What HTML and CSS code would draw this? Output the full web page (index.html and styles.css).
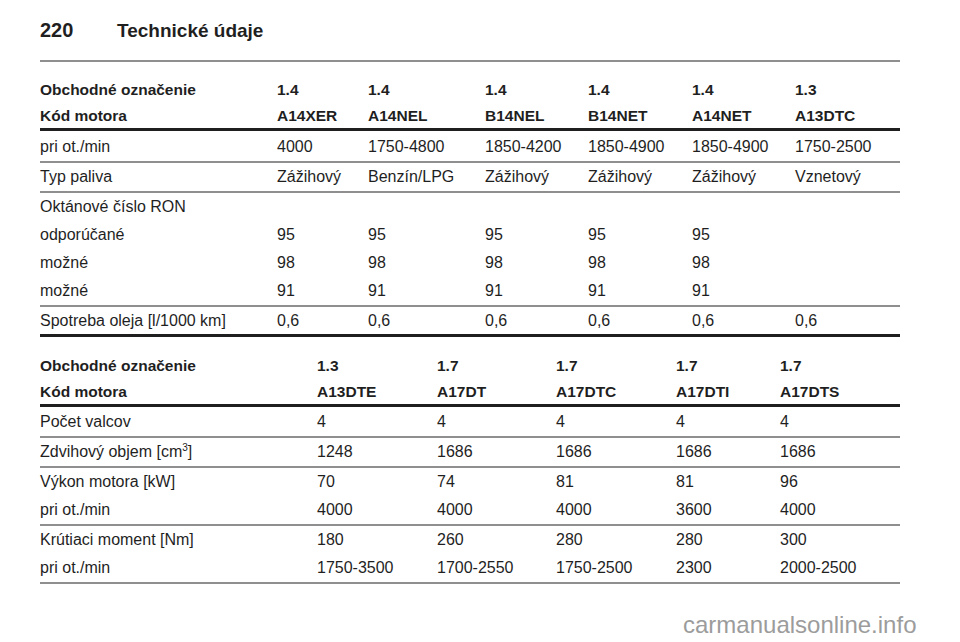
FILE: index.html
```html
<!DOCTYPE html>
<html lang="sk">
<head>
<meta charset="utf-8">
<title>Technické údaje</title>
<link rel="stylesheet" href="styles.css">
</head>
<body>
<div class="page">
  <header class="head">
    <span class="pno">220</span>
    <span class="ptitle">Technické údaje</span>
  </header>

  <section class="tbl t1">
    <div class="grp ghead">
      <div class="row h"><span>Obchodné označenie</span><span>1.4</span><span>1.4</span><span>1.4</span><span>1.4</span><span>1.4</span><span>1.3</span></div>
      <div class="row h"><span>Kód motora</span><span>A14XER</span><span>A14NEL</span><span>B14NEL</span><span>B14NET</span><span>A14NET</span><span>A13DTC</span></div>
    </div>
    <div class="grp first">
      <div class="row"><span>pri ot./min</span><span>4000</span><span>1750-4800</span><span>1850-4200</span><span>1850-4900</span><span>1850-4900</span><span>1750-2500</span></div>
    </div>
    <div class="grp">
      <div class="row"><span>Typ paliva</span><span>Zážihový</span><span>Benzín/LPG</span><span>Zážihový</span><span>Zážihový</span><span>Zážihový</span><span>Vznetový</span></div>
    </div>
    <div class="grp">
      <div class="row"><span>Oktánové číslo RON</span><span></span><span></span><span></span><span></span><span></span><span></span></div>
      <div class="row"><span>odporúčané</span><span>95</span><span>95</span><span>95</span><span>95</span><span>95</span><span></span></div>
      <div class="row"><span>možné</span><span>98</span><span>98</span><span>98</span><span>98</span><span>98</span><span></span></div>
      <div class="row"><span>možné</span><span>91</span><span>91</span><span>91</span><span>91</span><span>91</span><span></span></div>
    </div>
    <div class="grp gend">
      <div class="row short"><span>Spotreba oleja [l/1000 km]</span><span>0,6</span><span>0,6</span><span>0,6</span><span>0,6</span><span>0,6</span><span>0,6</span></div>
    </div>
  </section>

  <section class="tbl t2">
    <div class="grp ghead">
      <div class="row h"><span>Obchodné označenie</span><span>1.3</span><span>1.7</span><span>1.7</span><span>1.7</span><span>1.7</span></div>
      <div class="row h"><span>Kód motora</span><span>A13DTE</span><span>A17DT</span><span>A17DTC</span><span>A17DTI</span><span>A17DTS</span></div>
    </div>
    <div class="grp first1">
      <div class="row"><span>Počet valcov</span><span>4</span><span>4</span><span>4</span><span>4</span><span>4</span></div>
    </div>
    <div class="grp">
      <div class="row"><span>Zdvihový objem [cm<sup>3</sup>]</span><span>1248</span><span>1686</span><span>1686</span><span>1686</span><span>1686</span></div>
    </div>
    <div class="grp">
      <div class="row"><span>Výkon motora [kW]</span><span>70</span><span>74</span><span>81</span><span>81</span><span>96</span></div>
      <div class="row"><span>pri ot./min</span><span>4000</span><span>4000</span><span>4000</span><span>3600</span><span>4000</span></div>
    </div>
    <div class="grp">
      <div class="row"><span>Krútiaci moment [Nm]</span><span>180</span><span>260</span><span>280</span><span>280</span><span>300</span></div>
      <div class="row"><span>pri ot./min</span><span>1750-3500</span><span>1700-2550</span><span>1750-2500</span><span>2300</span><span>2000-2500</span></div>
    </div>
  </section>
</div>
<div class="watermark">carmanualsonline.info</div>
</body>
</html>
```

FILE: styles.css
```css
html, body {
  margin: 0;
  padding: 0;
  background: #ffffff;
}

body {
  width: 960px;
  height: 642px;
  position: relative;
  overflow: hidden;
  font-family: "Liberation Sans", Arial, sans-serif;
  color: #1f1f1f;
}

.page {
  width: 860px;
  padding-left: 40px;
}

.head {
  display: flex;
  align-items: center;
  box-sizing: border-box;
  height: 62px;
  padding-top: 1px;
  border-bottom: 2px solid #8f8f8f;
  font-size: 19px;
  font-weight: bold;
}

.pno {
  width: 77px;
  font-size: 20px;
}

.tbl {
  font-size: 16px;
}

.t1 {
  margin-top: 14px;
}

.t2 {
  margin-top: 15px;
}

.grp {
  border-bottom: 2px solid #8f8f8f;
}

.ghead {
  border-bottom: 3px solid #1f1f1f;
}

.gend {
  border-bottom: 3px solid #1f1f1f;
}

.first {
  padding-top: 2px;
}

.first1 {
  padding-top: 1px;
}

.row {
  display: grid;
  height: 28px;
  align-items: center;
  white-space: nowrap;
}

.row.h {
  box-sizing: border-box;
  height: 26px;
  padding-top: 2px;
  font-weight: bold;
  font-size: 15.5px;
}

.row.short {
  height: 27px;
}

.t1 .row {
  grid-template-columns: 237px 91px 117px 103px 104px 103px 105px;
}

.t2 .row {
  grid-template-columns: 277px 120px 119px 120px 104px 120px;
}

sup {
  font-size: 10px;
  line-height: 0;
  vertical-align: 6px;
}

.watermark {
  position: absolute;
  left: 683px;
  top: 611px;
  font-size: 24px;
  line-height: 28px;
  color: #9c9c9c;
  font-family: "Liberation Sans", Arial, sans-serif;
}
```
